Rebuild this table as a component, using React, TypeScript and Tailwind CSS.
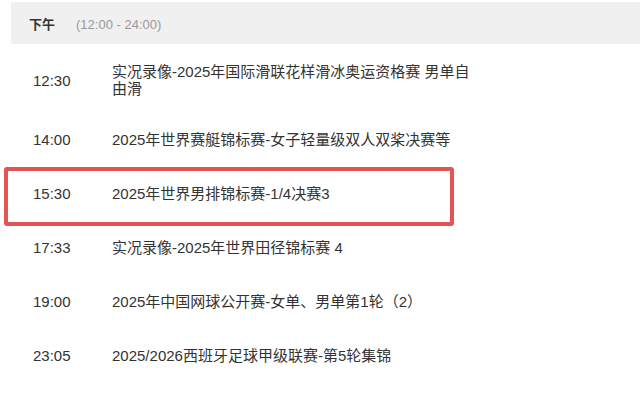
import React from "react";

const rows: { time: string; title: string; first?: boolean }[] = [
  { time: "12:30", title: "实况录像-2025年国际滑联花样滑冰奥运资格赛 男单自由滑", first: true },
  { time: "14:00", title: "2025年世界赛艇锦标赛-女子轻量级双人双桨决赛等" },
  { time: "15:30", title: "2025年世界男排锦标赛-1/4决赛3" },
  { time: "17:33", title: "实况录像-2025年世界田径锦标赛 4" },
  { time: "19:00", title: "2025年中国网球公开赛-女单、男单第1轮（2）" },
  { time: "23:05", title: "2025/2026西班牙足球甲级联赛-第5轮集锦" },
];

export default function App() {
  return (
    <div
      className="relative w-[640px] h-[400px] bg-white overflow-hidden text-[#333]"
      style={{ fontFamily: '"Liberation Sans", "Noto Sans CJK SC", sans-serif' }}
    >
      <div className="pt-[2px]">
        <div className="ml-[11px] h-[42px] bg-[#f0f0f0] flex items-center pl-[18px] pt-[3px]">
          <span className="text-[13px] font-bold text-[#333]">下午</span>
          <span className="ml-[21px] text-[13px] text-[#999]">(12:00 - 24:00)</span>
        </div>
      </div>
      <div className="flex flex-col">
        {rows.map((r) => (
          <div
            key={r.time}
            className={
              r.first
                ? "flex items-center pt-[19px] pb-[15px] text-[15px] leading-[17px]"
                : "flex items-center h-[54px] text-[15px] leading-[17px]"
            }
          >
            <div className="w-[112px] pl-[33px] shrink-0">{r.time}</div>
            <div className="w-[362px]">{r.title}</div>
          </div>
        ))}
      </div>
      <div className="absolute left-[4px] top-[167px] w-[450px] h-[59px] border-[4px] border-[#e35555] rounded-[3px]" />
    </div>
  );
}
